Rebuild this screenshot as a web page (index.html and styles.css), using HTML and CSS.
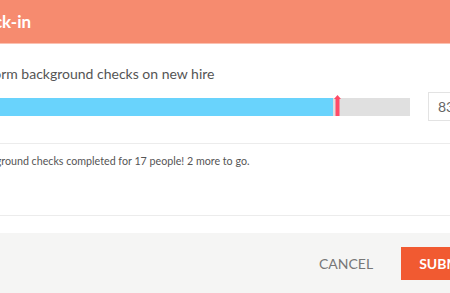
FILE: index.html
```html
<!DOCTYPE html>
<html>
<head>
<meta charset="utf-8">
<link rel="stylesheet" href="styles.css">
</head>
<body>
<div class="modal">
  <div class="header"><h1 class="title">Check-in</h1></div>
  <div class="body">
    <div class="label">Perform background checks on new hire</div>
    <div class="row">
      <div class="bar">
        <div class="fill" style="width: 82.6%"></div>
        <div class="marker">
          <svg width="7" height="21" viewBox="0 0 7 21"><path d="M3.5 0 L7 4 L5.5 4 L5.5 21 L1.5 21 L1.5 4 L0 4 Z" fill="#ff4b67"/></svg>
        </div>
      </div>
      <div class="input">83</div>
    </div>
  </div>
  <div class="note">Background checks completed for 17 people! 2 more to go.</div>
  <div class="spacer"></div>
  <div class="footer">
    <button class="cancel">CANCEL</button>
    <button class="submit">SUBMIT</button>
  </div>
</div>
</body>
</html>
```
FILE: styles.css
```css
html, body {
  margin: 0;
  padding: 0;
  overflow: hidden;
  background: #fff;
}
body {
  width: 450px;
  height: 293px;
  font-family: Lato, "Open Sans", sans-serif;
}
.modal {
  width: 580px;
  margin-left: -56px;
}
.header {
  height: 43px;
  background: #f68b6f;
  border-bottom: 1px solid #fbc1b1;
  display: flex;
  align-items: center;
  padding-left: 20px;
}
.title {
  margin: 0;
  font-size: 17px;
  font-weight: 700;
  color: #fff;
}
.body {
  padding: 20px 24px 22px 24px;
  border-bottom: 1px solid #ececec;
}
.label {
  font-size: 14px;
  line-height: 20px;
  color: #555;
}
.row {
  margin-top: 8px;
  display: flex;
  align-items: center;
  gap: 18px;
}
.bar {
  position: relative;
  flex: 0 0 442px;
  height: 18px;
  background: #e0e0e0;
}
.fill {
  height: 100%;
  background: #69d3fc;
}
.marker {
  position: absolute;
  left: 366px;
  top: -3px;
  line-height: 0;
}
.input {
  flex: 0 0 60px;
  height: 27px;
  border: 1px solid #e3e3e3;
  font-size: 14px;
  line-height: 27px;
  padding-left: 9px;
  color: #666;
}
.note {
  padding: 9px 24px 0 29px;
  height: 62px;
  font-size: 10.7px;
  line-height: 16px;
  color: #555;
  border-bottom: 1px solid #ececec;
}
.spacer {
  height: 17px;
}
.footer {
  background: #f5f5f4;
  height: 70px;
  display: flex;
  align-items: flex-start;
  padding-top: 14px;
  padding-left: 359px;
  box-sizing: border-box;
}
.cancel {
  font-family: Lato, sans-serif;
  font-size: 14px;
  color: #777;
  background: none;
  border: none;
  height: 33px;
  padding: 0 16px;
  margin-right: 12px;
}
.submit {
  font-family: Lato, sans-serif;
  font-size: 14px;
  font-weight: 700;
  color: #fff;
  background: #f15a31;
  border: none;
  height: 33px;
  padding: 0 18px;
}
```
